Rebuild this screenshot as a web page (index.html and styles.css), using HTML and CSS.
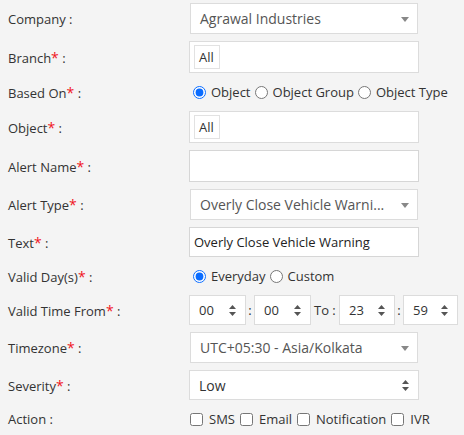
FILE: index.html
```html
<!DOCTYPE html>
<html lang="en">
<head>
  <meta charset="UTF-8" />
  <title>Add Alert</title>
  <link rel="stylesheet" href="styles.css">
</head>
<body>
  <form class="alert-form">
    <div class="row">
      <label>Company :</label>
      <div class="select s2">Agrawal Industries<span class="caret"></span></div>
    </div>

    <div class="row">
      <label>Branch<span class="req">*</span> :</label>
      <div class="tag-input tall"><span class="tag">All</span></div>
    </div>

    <div class="row radio-row">
      <label>Based On<span class="req">*</span> :</label>
      <div class="options">
        <label><input type="radio" name="based" checked> Object</label>
        <label><input type="radio" name="based"> Object Group</label>
        <label><input type="radio" name="based"> Object Type</label>
      </div>
    </div>

    <div class="row">
      <label>Object<span class="req">*</span> :</label>
      <div class="tag-input tall"><span class="tag">All</span></div>
    </div>

    <div class="row">
      <label>Alert Name<span class="req">*</span> :</label>
      <input type="text" class="text-input tall">
    </div>

    <div class="row">
      <label>Alert Type<span class="req">*</span> :</label>
      <div class="select s2">Overly Close Vehicle Warni...<span class="caret"></span></div>
    </div>

    <div class="row">
      <label>Text<span class="req">*</span> :</label>
      <input type="text" class="text-input" value="Overly Close Vehicle Warning">
    </div>

    <div class="row radio-row">
      <label>Valid Day(s)<span class="req">*</span> :</label>
      <div class="options">
        <label><input type="radio" name="days" checked> Everyday</label>
        <label><input type="radio" name="days"> Custom</label>
      </div>
    </div>

    <div class="row">
      <label>Valid Time From<span class="req">*</span> :</label>
      <div class="time">
        <div class="spin w57">00<svg class="arrows" width="7" height="11" viewBox="0 0 7 11"><path d="M3.5 0L7 4H0Z M3.5 11L0 7H7Z" fill="#555"/></svg></div>
        <span class="sep">:</span>
        <div class="spin w57">00<svg class="arrows" width="7" height="11" viewBox="0 0 7 11"><path d="M3.5 0L7 4H0Z M3.5 11L0 7H7Z" fill="#555"/></svg></div>
        <span class="to">To :</span>
        <div class="spin w56">23<svg class="arrows" width="7" height="11" viewBox="0 0 7 11"><path d="M3.5 0L7 4H0Z M3.5 11L0 7H7Z" fill="#555"/></svg></div>
        <span class="sep">:</span>
        <div class="spin w55">59<svg class="arrows" width="7" height="11" viewBox="0 0 7 11"><path d="M3.5 0L7 4H0Z M3.5 11L0 7H7Z" fill="#555"/></svg></div>
      </div>
    </div>

    <div class="row">
      <label>Timezone<span class="req">*</span> :</label>
      <div class="select s2">UTC+05:30 - Asia/Kolkata<span class="caret"></span></div>
    </div>

    <div class="row">
      <label>Severity<span class="req">*</span> :</label>
      <div class="select native">Low<svg class="arrows" width="7" height="11" viewBox="0 0 7 11"><path d="M3.5 0L7 4H0Z M3.5 11L0 7H7Z" fill="#555"/></svg></div>
    </div>

    <div class="row radio-row">
      <label>Action :</label>
      <div class="options checks">
        <label><input type="checkbox"> SMS</label>
        <label><input type="checkbox"> Email</label>
        <label><input type="checkbox"> Notification</label>
        <label><input type="checkbox"> IVR</label>
      </div>
    </div>
  </form>
</body>
</html>
```

FILE: styles.css
```css
body {
  font-family: "Open Sans", Arial, sans-serif;
  font-size: 13px;
  color: #333;
  background: #f4f4f4;
  margin: 0;
  padding: 3px 0 0 8px;
}
.alert-form {
  display: flex;
  flex-direction: column;
  gap: 7px;
}
.row {
  display: grid;
  grid-template-columns: 181px auto;
  align-items: center;
}
.req {
  color: #f0141e;
  font-size: 14px;
}
.select {
  box-sizing: border-box;
  width: 228px;
  height: 31px;
  margin-left: 1px;
  background: #fff;
  border: 1px solid #dcdcdc;
  color: #555;
  font-size: 14px;
  padding-left: 9px;
  display: flex;
  align-items: center;
  position: relative;
}
.select.native {
  width: 230px;
  height: 30px;
  margin-left: 0;
  color: #333;
}
.caret {
  position: absolute;
  right: 8px;
  top: 13px;
  border-left: 4px solid transparent;
  border-right: 4px solid transparent;
  border-top: 5px solid #888;
}
.arrows {
  position: absolute;
  right: 9px;
  top: 9px;
}
.tag-input {
  box-sizing: border-box;
  width: 230px;
  height: 32px;
  background: #fff;
  border: 1px solid #dcdcdc;
  padding: 3px 4px;
}
.tag {
  display: inline-block;
  box-sizing: border-box;
  height: 24px;
  line-height: 22px;
  padding: 0 5px 0 4px;
  border: 1px solid #e2e2e2;
  color: #333;
  font-size: 13px;
}
.text-input {
  box-sizing: border-box;
  width: 230px;
  height: 30px;
  margin: 0;
  background: #fff;
  border: 1px solid #d6d6d6;
  padding: 0 4px;
  font-family: inherit;
  font-size: 13px;
  color: #222;
  outline: none;
}
.text-input.tall {
  height: 32px;
}
.radio-row {
  min-height: 24px;
}
.options {
  display: flex;
  align-items: center;
}
.options label {
  display: flex;
  align-items: center;
}
.options input {
  width: 13px;
  height: 13px;
  margin: 0 5px 0 4px;
  accent-color: #0a6cff;
}
.checks input {
  margin: 0 6px 0 1px;
}
.checks label {
  margin-right: 4px;
}
.time {
  display: flex;
  align-items: center;
}
.spin {
  box-sizing: border-box;
  height: 30px;
  background: #fff;
  border: 1px solid #dcdcdc;
  padding-left: 9px;
  display: flex;
  align-items: center;
  position: relative;
}
.w57 { width: 57px; }
.w56 { width: 56px; }
.w55 { width: 55px; }
.sep {
  width: 8px;
  text-align: center;
}
.to {
  width: 28px;
  padding-left: 3px;
  box-sizing: border-box;
}
```
